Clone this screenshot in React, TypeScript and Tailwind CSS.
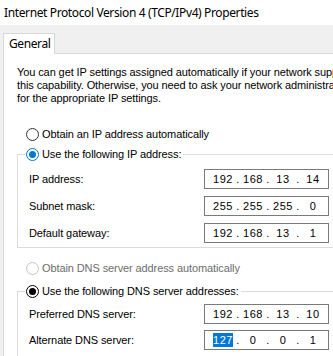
import React from 'react';

type RadioKind = 'off' | 'blue' | 'black' | 'disabled';

function Radio({ kind }: { kind: RadioKind }) {
  const ring =
    kind === 'blue'
      ? 'border-[#0078d7]'
      : kind === 'black'
        ? 'border-black'
        : kind === 'disabled'
          ? 'border-[#c6c6c6]'
          : 'border-[#333333]';
  return (
    <span className={`w-[13px] h-[13px] rounded-full border bg-white flex items-center justify-center shrink-0 ${ring}`}>
      {kind === 'blue' && <span className="w-[7px] h-[7px] rounded-full bg-[#0078d7]" />}
      {kind === 'black' && <span className="w-[7px] h-[7px] rounded-full bg-black" />}
    </span>
  );
}

function RadioLabel({ kind, text }: { kind: RadioKind; text: string }) {
  return (
    <span className={`flex items-center gap-[3px] h-[14px] whitespace-nowrap ${kind === 'disabled' ? 'text-[#6d6d6d]' : ''}`}>
      <Radio kind={kind} />
      {text}
    </span>
  );
}

function IpBox({ parts, selectFirst }: { parts: string[]; selectFirst?: boolean }) {
  return (
    <div className="w-[125px] h-[20px] border border-[#7a7a7a] bg-white flex items-center pl-[6px] tracking-[0.6px]">
      {parts.map((p, i) => (
        <React.Fragment key={i}>
          {i > 0 && <span className="w-[6px] text-center">.</span>}
          <span className="w-[24px] text-center">
            {i === 0 && selectFirst ? (
              <span className="bg-[#0078d7] text-white leading-[14px] inline-block">{p}</span>
            ) : (
              p
            )}
          </span>
        </React.Fragment>
      ))}
    </div>
  );
}

function Row({ label, parts, selectFirst }: { label: string; parts: string[]; selectFirst?: boolean }) {
  return (
    <div className="flex items-center h-[20px] pl-[11px]">
      <span className="w-[175px] whitespace-nowrap">{label}</span>
      <IpBox parts={parts} selectFirst={selectFirst} />
    </div>
  );
}

export default function App() {
  return (
    <div className="w-[333px] h-[356px] overflow-hidden bg-[#f0f0f0] text-[11px] tracking-[-0.1px] text-black font-['Liberation_Sans',Arial,sans-serif]">
      <div className="w-[420px]">
        <div className="h-[25px] bg-white flex items-center pl-[4px] whitespace-nowrap text-[12px] tracking-[-0.38px] font-['Noto_Sans',sans-serif]">
          Internet Protocol Version 4 (TCP/IPv4) Properties
        </div>

        <div className="flex pt-[8px] pl-[3px]">
          <div className="h-[21px] w-[52px] bg-white border border-b-0 border-[#d9d9d9] pl-[5px] flex items-center text-[12px] tracking-[-0.4px] font-['Noto_Sans',sans-serif]">
            General
          </div>
          <div className="flex-1 border-b border-[#d9d9d9]" />
        </div>

        <div className="ml-[3px] h-[320px] border-l border-[#d9d9d9] bg-white pl-[13px] pt-[12px]">
          <p className="leading-[13px] whitespace-nowrap">
            You can get IP settings assigned automatically if your network supports
            <br />
            this capability. Otherwise, you need to ask your network administrator
            <br />
            for the appropriate IP settings.
          </p>

          <div className="mt-[22px] pl-[9px]">
            <RadioLabel kind="off" text="Obtain an IP address automatically" />
          </div>

          <fieldset className="mt-[6px] border border-[#dcdcdc] pb-[4px]">
            <legend className="ml-[7px] pl-[1px] pr-[2px]">
              <RadioLabel kind="blue" text="Use the following IP address:" />
            </legend>
            <div className="flex flex-col gap-[7px] pt-[8px]">
              <Row label="IP address:" parts={['192', '168', '13', '14']} />
              <Row label="Subnet mask:" parts={['255', '255', '255', '0']} />
              <Row label="Default gateway:" parts={['192', '168', '13', '1']} />
            </div>
          </fieldset>

          <div className="mt-[13px] pl-[9px]">
            <RadioLabel kind="disabled" text="Obtain DNS server address automatically" />
          </div>

          <fieldset className="mt-[9px] border border-[#dcdcdc] pb-[20px]">
            <legend className="ml-[7px] pl-[1px] pr-[2px]">
              <RadioLabel kind="black" text="Use the following DNS server addresses:" />
            </legend>
            <div className="flex flex-col gap-[6px] pt-[6px]">
              <Row label="Preferred DNS server:" parts={['192', '168', '13', '10']} />
              <Row label="Alternate DNS server:" parts={['127', '0', '0', '1']} selectFirst />
            </div>
          </fieldset>
        </div>
      </div>
    </div>
  );
}
